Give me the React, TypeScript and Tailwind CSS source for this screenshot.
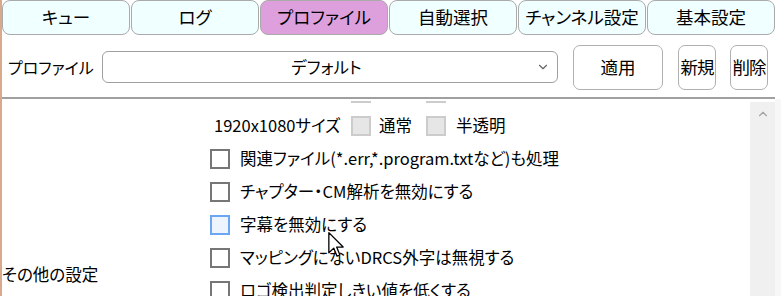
import { ChevronDown, ChevronUp } from 'lucide-react';

const TABS = ['キュー', 'ログ', 'プロファイル', '自動選択', 'チャンネル設定', '基本設定'];

const OPTIONS = [
  { label: '関連ファイル(*.err,*.program.txtなど)も処理' },
  { label: 'チャプター・CM解析を無効にする' },
  { label: '字幕を無効にする', hover: true },
  { label: 'マッピングにないDRCS外字は無視する' },
  { label: 'ロゴ検出判定しきい値を低くする' },
];

function GrayBox() {
  return <div className="w-[20px] h-[20px] border-[2px] border-[#cccccc] bg-[#e6e6e6] shrink-0" />;
}

function CheckRow({ label, hover }: { label: string; hover?: boolean }) {
  return (
    <div className="h-[33px] flex items-center gap-[10px]">
      <div
        className={`w-[20px] h-[20px] shrink-0 border-[2px] ${
          hover ? 'border-[#6aa6f2] bg-[#eef4fe]' : 'border-[#767676] bg-white'
        }`}
      />
      <span className="text-[16.5px] text-black whitespace-nowrap">{label}</span>
    </div>
  );
}

function Cursor() {
  return (
    <svg className="absolute left-[326px] top-[232px]" width="16" height="26" viewBox="0 0 12 20">
      <path d="M0.5 0.5 L0.5 16 L4.3 12.4 L6.8 18.6 L9 17.7 L6.5 11.6 L11.5 11.6 Z" fill="white" stroke="black" strokeWidth="1" strokeLinejoin="round" />
    </svg>
  );
}

export default function App() {
  return (
    <div
      className="relative w-[781px] h-[296px] overflow-hidden bg-white border-l-[2px] border-[#d9a98c] flex flex-col text-black [font-feature-settings:'palt']"
      style={{ fontFamily: '"Noto Sans CJK JP", "Noto Sans", sans-serif' }}
    >
      {/* Tabs */}
      <div className="flex gap-[1px] h-[35px] w-[773px]">
        {TABS.map((t, i) => (
          <div
            key={t}
            className={`flex-1 rounded-[8px] border border-[#aaaaaa] flex items-center justify-center text-[17.5px] ${
              i === 2 ? 'bg-[#dda0dd]' : 'bg-[#f0ffff]'
            }`}
          >
            {t}
          </div>
        ))}
      </div>

      {/* Profile row */}
      <div className="h-[62px] flex items-center w-[773px] pt-[2px]">
        <span className="w-[100px] pl-[6px] text-[16px]">プロファイル</span>
        <div className="w-[456px] h-[32px] rounded-[6px] border border-[#a0a0a0] flex items-center relative">
          <span className="flex-1 text-center text-[16.5px] pl-[14px]">デフォルト</span>
          <ChevronDown size={14} className="text-[#666] mr-[7px]" strokeWidth={2} />
        </div>
        <button className="ml-[15px] w-[90px] h-[45px] rounded-[7px] border border-[#b0b0b0] bg-white text-[17.5px]">
          適用
        </button>
        <button className="ml-[15px] w-[38px] h-[45px] rounded-[7px] border border-[#b0b0b0] bg-white text-[17.5px] tracking-[-1px] whitespace-nowrap flex items-center justify-center">
          新規
        </button>
        <button className="ml-[14px] w-[38px] h-[45px] rounded-[7px] border border-[#b0b0b0] bg-white text-[17.5px] tracking-[-1px] whitespace-nowrap flex items-center justify-center">
          削除
        </button>
      </div>

      {/* Separator */}
      <div className="h-[2px] w-[773px] bg-[#a0a0a0]" />

      {/* Scroll area */}
      <div className="flex-1 flex min-h-0">
        <div className="flex-1 flex min-h-0 pt-[2px]">
          <div className="w-[208px] shrink-0 pt-[161px]">
            <span className="text-[16.5px] whitespace-nowrap">その他の設定</span>
          </div>
          <div className="flex-1 overflow-hidden">
            <div className="mt-[-25px]">
              <div className="h-[33px] flex items-center">
                <div className="ml-[141px]"><GrayBox /></div>
                <div className="ml-[55px]"><GrayBox /></div>
              </div>
              <div className="h-[33px] flex items-center pl-[4px]">
                <span className="w-[127px] text-[16.5px] whitespace-nowrap">1920x1080サイズ</span>
                <div className="ml-[10px]"><GrayBox /></div>
                <span className="ml-[8px] w-[39px] text-[16.5px]">通常</span>
                <div className="ml-[8px]"><GrayBox /></div>
                <span className="ml-[10px] text-[16.5px]">半透明</span>
              </div>
              {OPTIONS.map(o => (
                <CheckRow key={o.label} label={o.label} hover={o.hover} />
              ))}
            </div>
          </div>
        </div>
        <div className="w-[25px] mt-[3px] bg-[#f0f0f0] flex flex-col">
          <div className="h-[24px] flex items-center justify-center">
            <ChevronUp size={14} className="text-[#a3a3a3]" strokeWidth={2} />
          </div>
        </div>
        <div className="w-[6px] bg-[#f7f7f7]" />
      </div>

      <Cursor />
    </div>
  );
}
